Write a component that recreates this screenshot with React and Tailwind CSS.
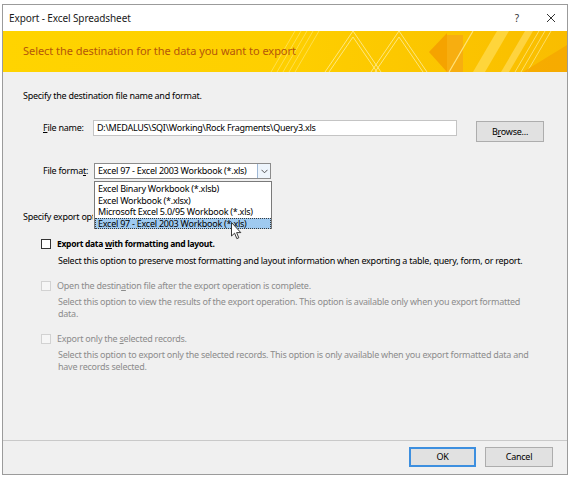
import React from 'react';

const formats = [
  'Excel Binary Workbook (*.xlsb)',
  'Excel Workbook (*.xlsx)',
  'Microsoft Excel 5.0/95 Workbook (*.xls)',
  'Excel 97 - Excel 2003 Workbook (*.xls)',
];

function TitleBar() {
  return (
    <div className="h-[26px] bg-white flex items-center pl-[6px] shrink-0">
      <span className="text-[10px] tracking-[-0.1px] text-[#1a1a1a]">Export - Excel Spreadsheet</span>
      <span className="ml-auto mr-[27px] text-[10px] text-[#333]">?</span>
      <svg width="10" height="10" viewBox="0 0 10 10" className="mr-[11px]">
        <path d="M1 1 L9 9 M9 1 L1 9" stroke="#333" strokeWidth="1" />
      </svg>
    </div>
  );
}

function Banner() {
  return (
    <div className="relative h-[41px] shrink-0 overflow-hidden bg-gradient-to-r from-[#ffd400] via-[#fecf00] to-[#f9bd00]">
      <svg className="absolute inset-0" width="564" height="41" viewBox="0 0 564 41">
        {/* faint stripes */}
        <g stroke="#ffe66a" strokeWidth="1" opacity="0.7">
          <path d="M268 41 L292 0" />
          <path d="M274 41 L298 0" />
          <path d="M280 41 L304 0" />
          <path d="M286 41 L310 0" />
          <path d="M292 41 L316 0" />
        </g>
        {/* thin white chevrons */}
        <g stroke="#fff3b0" strokeWidth="0.8" fill="none" opacity="0.9">
          <path d="M322 41 L350 0 L378 41" />
          <path d="M326 41 L350 6 L374 41" />
          <path d="M368 41 L396 0 L424 41" />
          <path d="M372 41 L396 6 L420 41" />
        </g>
        {/* arrow */}
        <polygon points="426,21 444,2 444,41" fill="#f5a300" />
        <rect x="444" y="4" width="16" height="37" fill="#f7ae10" />
        <path d="M446 41 L470 0" stroke="#ffe27a" strokeWidth="1.2" />
        {/* wide bands on the right */}
        <polygon points="470,41 494,0 506,0 482,41" fill="#ffd94a" opacity="0.8" />
        <polygon points="498,41 522,0 530,0 506,41" fill="#ffdc5a" opacity="0.7" />
        <g stroke="#fff0a0" strokeWidth="0.8" opacity="0.8">
          <path d="M512 41 L536 0" />
          <path d="M518 41 L542 0" />
          <path d="M524 41 L548 0" />
        </g>
        <polygon points="520,41 564,14 564,41" fill="#f6a800" opacity="0.85" />
      </svg>
      <span className="relative block pl-[20px] pt-[13px] text-[11px] leading-[14px] tracking-[-0.05px] text-[#b4560b]">
        Select the destination for the data you want to export
      </span>
    </div>
  );
}

function Checkbox({ disabled }) {
  return (
    <span
      className={
        disabled
          ? 'mt-[1px] w-[10px] h-[10px] shrink-0 border border-[#d2d2d2] bg-[#f6f6f6]'
          : 'mt-[1px] w-[10px] h-[10px] shrink-0 border border-[#333] bg-white'
      }
    />
  );
}

function Option({ disabled, title, children, className }) {
  return (
    <div className={'flex ml-[18px] gap-[6px] ' + (className || '')}>
      <Checkbox disabled={disabled} />
      <div className="flex flex-col">
        <div
          className={
            disabled
              ? 'text-[9px] leading-[12px] tracking-[-0.25px] text-[#8c8c8c] whitespace-nowrap'
              : 'text-[8.5px] leading-[12px] tracking-[-0.3px] font-bold text-black whitespace-nowrap'
          }
        >
          {title}
        </div>
        <div
          className={
            disabled
              ? 'mt-[4.5px] pl-[1px] text-[9px] leading-[11.5px] tracking-[-0.25px] text-[#8c8c8c] whitespace-nowrap'
              : 'mt-[4.5px] pl-[1px] text-[9px] leading-[11.5px] tracking-[-0.25px] text-black whitespace-nowrap'
          }
        >
          {children}
        </div>
      </div>
    </div>
  );
}

export default function App() {
  return (
    <div className="w-[572px] h-[477px] bg-white pt-[4px] pl-[2px] font-['Noto_Sans',sans-serif] text-black">
      <div className="w-[566px] h-[471px] border border-[#9b9b9b] flex flex-col bg-[#f0f0f0]">
        <TitleBar />
        <Banner />

        <div className="relative flex-1 pl-[20px] text-[9px] tracking-[-0.25px]">
          <div className="mt-[18px] leading-[12px]">Specify the destination file name and format.</div>

          {/* file name */}
          <div className="mt-[18px] flex items-start">
            <label className="ml-[20px] w-[50px] leading-[16px]">
              <span className="underline">F</span>ile name:
            </label>
            <div className="w-[364px] h-[16px] border border-[#c4c4c4] bg-white pl-[3px] leading-[14px] whitespace-nowrap">
              D:\MEDALUS\SQI\Working\Rock Fragments\Query3.xls
            </div>
            <button className="ml-[19px] mt-[1px] w-[68px] h-[21px] border border-[#adadad] bg-[#e1e1e1] leading-[19px] text-center">
              B<span className="underline">r</span>owse...
            </button>
          </div>

          {/* file format */}
          <div className="mt-[21px] flex items-start">
            <label className="ml-[20px] w-[51px] leading-[16px] whitespace-nowrap">
              File forma<span className="underline">t</span>:
            </label>
            <div className="relative w-[177px] h-[16px] border border-[#8c8c8c] bg-white flex">
              <span className="flex-1 pl-[3px] leading-[14px] whitespace-nowrap">Excel 97 - Excel 2003 Workbook (*.xls)</span>
              <span className="w-[13px] h-[14px] border-l border-[#9fb8d6] bg-[#eef5fc] flex items-center justify-center">
                <svg width="7" height="5" viewBox="0 0 7 5">
                  <path d="M0.5 0.8 L3.5 3.8 L6.5 0.8" stroke="#444" strokeWidth="0.9" fill="none" />
                </svg>
              </span>
              <ul className="absolute left-[-1px] top-[17px] w-[178px] h-[48px] border border-[#7a7a7a] bg-white py-[1px] z-10">
                {formats.map((f, i) => (
                  <li
                    key={f}
                    className={
                      i === formats.length - 1
                        ? 'h-[11.5px] leading-[10.5px] pl-[2px] bg-[#9fcaf0] border border-dotted border-[#3a3a3a] whitespace-nowrap'
                        : 'h-[11.5px] leading-[11.5px] pl-[3px] whitespace-nowrap'
                    }
                  >
                    {f}
                  </li>
                ))}
              </ul>
            </div>
          </div>

          {/* the open list hides the rest of this line */}
          <div className="mt-[32px] w-[70px] overflow-hidden leading-[12px] whitespace-nowrap">Specify export options.</div>

          <Option
            className="mt-[15px]"
            title={
              <>
                Export data <span className="underline">w</span>ith formatting and layout.
              </>
            }
          >
            Select this option to preserve most formatting and layout information when exporting a table, query, form, or report.
          </Option>

          <Option
            disabled
            className="mt-[13.5px]"
            title={
              <>
                Open the destin<span className="underline">a</span>tion file after the export operation is complete.
              </>
            }
          >
            Select this option to view the results of the export operation. This option is available only when you export formatted
            <br />
            data.
          </Option>

          <Option
            disabled
            className="mt-[13.5px]"
            title={
              <>
                Export only the <span className="underline">s</span>elected records.
              </>
            }
          >
            Select this option to export only the selected records. This option is only available when you export formatted data and
            <br />
            have records selected.
          </Option>

          {/* mouse pointer */}
          <svg className="absolute left-[228px] top-[150px] z-20" width="11" height="18" viewBox="0 0 11 18">
            <path
              d="M0.5 0.5 L0.5 14 L3.6 11.2 L5.8 16.6 L7.8 15.8 L5.6 10.6 L9.8 10.6 Z"
              fill="#fff"
              stroke="#222"
              strokeWidth="0.9"
              strokeLinejoin="round"
            />
          </svg>
        </div>

        {/* buttons */}
        <div className="h-[34px] shrink-0 border-t border-[#c9c9c9] flex justify-end items-start pt-[6px] pr-[14px] gap-[9px] text-[9px] tracking-[-0.25px]">
          <button className="w-[67px] h-[20px] border-2 border-[#3d8fdf] bg-[#e1e1e1] leading-[16px]">OK</button>
          <button className="w-[68px] h-[20px] border border-[#adadad] bg-[#e1e1e1] leading-[18px]">Cancel</button>
        </div>
      </div>
    </div>
  );
}
